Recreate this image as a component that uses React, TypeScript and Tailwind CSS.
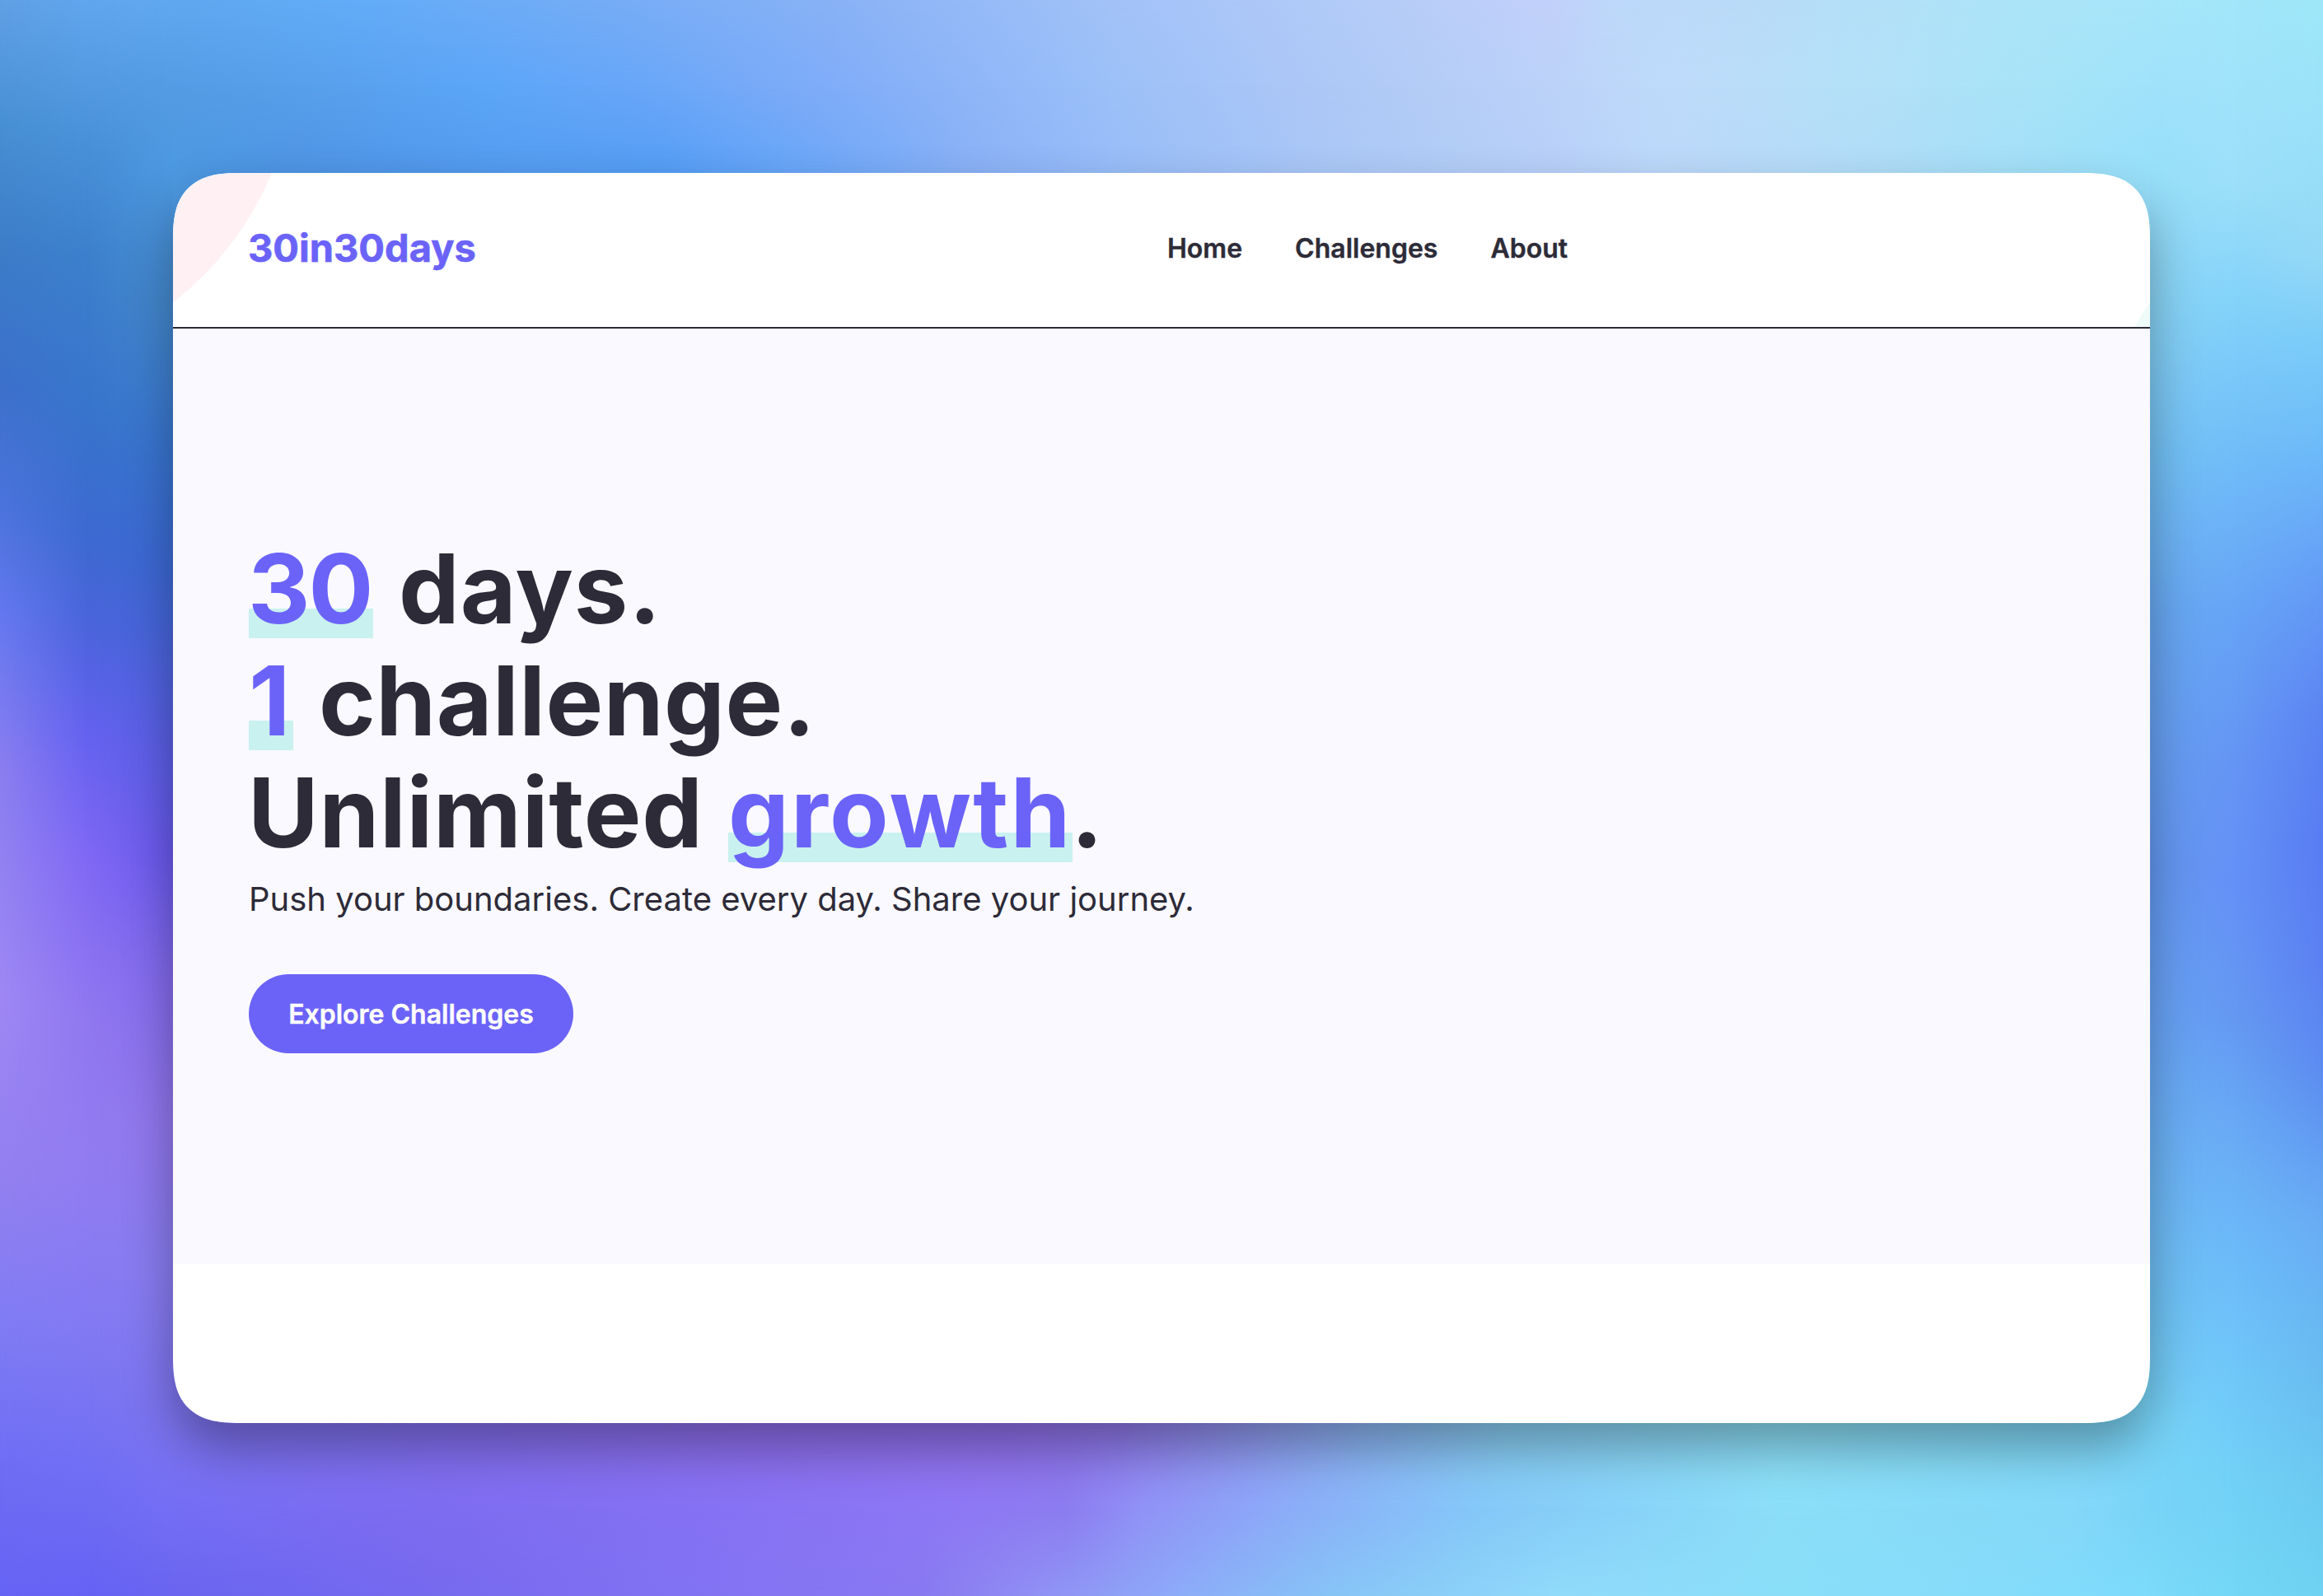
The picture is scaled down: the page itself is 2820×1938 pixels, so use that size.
type Stop = [color: string, at: number];

type StripProps = {
  direction: "right" | "bottom";
  start: Stop[];
  middle: Stop[];
  end: Stop[];
};

const LEFT: Omit<StripProps, "direction"> = {
  start: [["#60a0e4", 0], ["#4890d4", 150], ["#3c7cc8", 310], ["#3c70cc", 470], ["#4c74dc", 618], ["#6478f0", 742], ["#8a7ef0", 927], ["#9e88f4", 1211], ["#9480f0", 1421], ["#807cf4", 1607], ["#6e6cf4", 1792], ["#6664f4", 1938]],
  middle: [["#60a6ee", 0], ["#4890d8", 180], ["#3c80cc", 309], ["#3874cc", 495], ["#3c6ad0", 643], ["#4c64dc", 766], ["#6462f0", 890], ["#8068f4", 1038], ["#9078f0", 1236], ["#927cf2", 1421], ["#827af2", 1607], ["#706ef4", 1792], ["#6662f4", 1938]],
  end: [["#60a8f0", 0], ["#549ce4", 105], ["#4c98e0", 210], ["#4488cc", 371], ["#3874d0", 556], ["#3c68d4", 692], ["#5460e0", 865], ["#6858ec", 1038], ["#8068ec", 1174], ["#9076ec", 1360], ["#887cf0", 1545], ["#7c74f0", 1728], ["#746ef4", 1833], ["#6a64f0", 1938]],
};

const RIGHT: Omit<StripProps, "direction"> = {
  start: [["#a6e6fa", 0], ["#a0e2fa", 105], ["#98dffa", 210], ["#88d2f4", 371], ["#72c0f4", 556], ["#68a8f0", 742], ["#6498f0", 1051], ["#68a4f4", 1236], ["#6cb4f4", 1421], ["#70c4f4", 1607], ["#78d4f8", 1728], ["#78d4f8", 1833], ["#7cdafa", 1938]],
  middle: [["#a2e6fa", 0], ["#9cdff9", 222], ["#82d2fa", 371], ["#70bcf8", 556], ["#66a4f6", 742], ["#6494f4", 927], ["#6490f6", 1075], ["#6498f2", 1236], ["#6ab0f6", 1421], ["#6ec2fa", 1607], ["#72d0f6", 1792], ["#74d6f6", 1938]],
  end: [["#9ee6f8", 0], ["#9ae0f8", 161], ["#94d8f6", 309], ["#7cccf8", 408], ["#6cb8f8", 556], ["#649cf6", 705], ["#5c84f2", 865], ["#587cf2", 1026], ["#5c80f2", 1174], ["#5c8cf0", 1298], ["#68acf4", 1483], ["#68bcf0", 1669], ["#6cc8f0", 1792], ["#6ed2f2", 1938]],
};

const TOP: Omit<StripProps, "direction"> = {
  start: [["#60a8f0", 0], ["#62acf8", 220], ["#74acf6", 509], ["#88b2f6", 797], ["#a2c2f8", 1139], ["#b2cbf8", 1409], ["#c2d1fa", 1678], ["#bed8fa", 1740], ["#b8dcf8", 1948], ["#b0e2f8", 2128], ["#a6e6fa", 2400]],
  middle: [["#549ce4", 0], ["#589fea", 150], ["#5ca6f8", 383], ["#68a6f8", 563], ["#80acf8", 797], ["#9cc0f8", 1139], ["#aec8f6", 1409], ["#bcd2f8", 1678], ["#bedafa", 1804], ["#b4e0f8", 2038], ["#a4e4f8", 2308], ["#a0e2fa", 2400]],
  end: [["#4c98e0", 0], ["#4e94e4", 150], ["#549cf0", 419], ["#549ef6", 599], ["#6ea8f8", 797], ["#88b0f6", 959], ["#98bcf8", 1139], ["#aac8f6", 1409], ["#b8d0f8", 1678], ["#bcd8fa", 1804], ["#b2dcf8", 2038], ["#9ee0f8", 2308], ["#98dffa", 2400]],
};

const BOTTOM: Omit<StripProps, "direction"> = {
  start: [["#7c74f0", 0], ["#8470f0", 330], ["#8e6eec", 689], ["#9070ec", 1020], ["#9078ec", 1150], ["#9094f0", 1290], ["#8cb4f4", 1439], ["#8ad0f6", 1620], ["#8ce0f8", 1948], ["#80d8f8", 2308], ["#78d4f8", 2400]],
  middle: [["#746ef4", 0], ["#7e6cf0", 330], ["#8672f4", 689], ["#8e78f4", 959], ["#8c7cf0", 1085], ["#9092f6", 1175], ["#8cacf8", 1355], ["#84c8f8", 1589], ["#8cdef8", 1948], ["#84d8f8", 2308], ["#78d4f8", 2400]],
  end: [["#6a64f0", 0], ["#766aee", 330], ["#8474f4", 689], ["#8878f0", 905], ["#9090f4", 1049], ["#8cacf8", 1229], ["#86c4f6", 1409], ["#90dafa", 1678], ["#8adef8", 1948], ["#84dcfa", 2218], ["#7cdafa", 2400]],
};

const gradient = (direction: string, stops: Stop[]) =>
  `linear-gradient(to ${direction}, ${stops.map(([c, at]) => `${c} ${at}px`).join(", ")})`;

// Three parallel gradients, cross-faded over the strip's short side.
function Strip({ direction, start, middle, end }: StripProps) {
  const down = direction === "right";
  return (
    <div className="relative h-full w-full" style={{ backgroundImage: gradient(direction, start) }}>
      <div
        className={`absolute inset-0 ${down ? "[mask-image:linear-gradient(to_bottom,transparent,black_50%)]" : "[mask-image:linear-gradient(to_right,transparent,black_50%)]"}`}
        style={{ backgroundImage: gradient(direction, middle) }}
      />
      <div
        className={`absolute inset-0 ${down ? "[mask-image:linear-gradient(to_bottom,transparent_50%,black)]" : "[mask-image:linear-gradient(to_right,transparent_50%,black)]"}`}
        style={{ backgroundImage: gradient(direction, end) }}
      />
    </div>
  );
}

function Wallpaper() {
  return (
    <div className="col-start-1 row-start-1 grid h-[1938px] w-[2820px] grid-cols-[210px_2400px_210px]">
      <Strip direction="bottom" {...LEFT} />
      <div className="grid grid-rows-[210px_759px_759px_210px]">
        <Strip direction="right" {...TOP} />
        <div style={{ backgroundImage: gradient("right", TOP.end) }} />
        <div style={{ backgroundImage: gradient("right", BOTTOM.start) }} />
        <Strip direction="right" {...BOTTOM} />
      </div>
      <Strip direction="bottom" {...RIGHT} />
    </div>
  );
}

function Highlight({ className, children }: { className: string; children: string }) {
  return (
    <span
      className={`inline-block h-[136px] bg-[linear-gradient(#c9f1ef,#c9f1ef)] bg-[length:100%_36px] bg-[position:0_92px] bg-no-repeat text-[#6b63f8] ${className}`}
    >
      {children}
    </span>
  );
}

export default function App() {
  return (
    <div className="grid h-[1938px] w-[2820px] overflow-hidden font-['Inter',sans-serif] text-[#2d2b38]">
      <Wallpaper />
      <div className="z-10 col-start-1 row-start-1 mt-[210px] ml-[210px] h-[1518px] w-[2400px] rounded-[62px] shadow-[0_30px_60px_rgba(0,0,0,0.33)] supports-[corner-shape:squircle]:rounded-[82px] [corner-shape:superellipse(1.44)]">
        <div className="flex h-full w-full flex-col overflow-hidden rounded-[62px] bg-white supports-[corner-shape:squircle]:rounded-[82px] [corner-shape:superellipse(1.44)]">
          <header className="relative flex h-[189px] shrink-0 items-start overflow-hidden border-b-2 border-[#2d2b38] pt-[61px] pl-[91px]">
            <div className="absolute -top-[540px] -left-[630px] size-[780px] rounded-full bg-[#fef0f3]" />
            <div className="absolute -top-[15px] left-[2333px] size-[780px] rounded-full bg-[#effbf9]" />
            <a className="relative w-[1116px] text-[47px] leading-[60px] font-bold text-[#6b63f8] [-webkit-text-stroke:0.6px_#6b63f8]">30in30days</a>
            <nav className="relative flex gap-16 pt-px text-[32px] leading-[60px] font-semibold [-webkit-text-stroke:0.4px_#2d2b38]">
              <a>Home</a>
              <a>Challenges</a>
              <a>About</a>
            </nav>
          </header>
          <main className="h-[1136px] shrink-0 bg-[#faf9ff] pt-[248px] pl-[92px]">
            <h1 className="text-[117px] leading-[136px] font-bold whitespace-nowrap">
              <div className="flex">
                <Highlight className="w-[151px] -indent-[1px] tracking-[-2px]">30</Highlight>
                <span className="ml-[31px] tracking-[0.9px]">days.</span>
              </div>
              <div className="flex">
                <Highlight className="w-[54px]">1</Highlight>
                <span className="ml-[31px] tracking-[0.5px]">challenge.</span>
              </div>
              <div className="flex">
                <span className="w-[582px] -indent-[1px] tracking-[0.8px]">Unlimited</span>
                <Highlight className="w-[418px] tracking-[2.2px]">growth</Highlight>
                <span className="-ml-[2px]">.</span>
              </div>
            </h1>
            <p className="pt-px text-[40px] leading-[72px]">Push your boundaries. Create every day. Share your journey.</p>
            <button className="mt-[55px] flex h-24 w-[394px] items-center justify-center rounded-full bg-[#6b63f8] pt-px text-[32px] font-semibold text-white [-webkit-text-stroke:0.4px_white]">
              Explore Challenges
            </button>
          </main>
        </div>
      </div>
    </div>
  );
}
